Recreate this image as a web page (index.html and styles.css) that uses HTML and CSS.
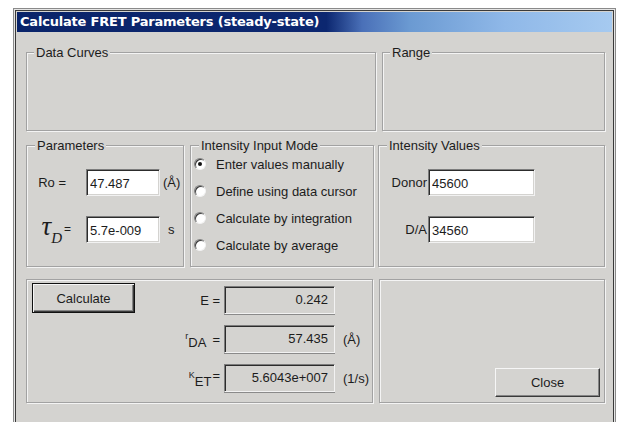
FILE: index.html
```html
<!DOCTYPE html>
<html lang="en">
<head>
<meta charset="utf-8">
<title>Calculate FRET Parameters</title>
<link rel="stylesheet" href="styles.css">
</head>
<body>
<div class="window">
  <div class="titlebar">Calculate FRET Parameters (steady-state)</div>
  <div class="client">
    <div class="row row-top">
      <fieldset class="group g-curves"><legend>Data Curves</legend></fieldset>
      <fieldset class="group g-range"><legend>Range</legend></fieldset>
    </div>

    <div class="row row-mid">
      <fieldset class="group g-params">
        <legend>Parameters</legend>
        <div class="field-row">
          <span class="flabel lbl-ro">Ro =</span>
          <input class="edit edit-param" type="text" value="47.487">
          <span class="unit">(Å)</span>
        </div>
        <div class="field-row">
          <span class="flabel lbl-tau"><span class="tau">τ</span><span class="tau-sub">D</span><span class="tau-eq">=</span></span>
          <input class="edit edit-param" type="text" value="5.7e-009">
          <span class="unit unit-s">s</span>
        </div>
      </fieldset>

      <fieldset class="group g-mode">
        <legend>Intensity Input Mode</legend>
        <div class="options">
          <label class="option"><span class="radio checked"></span>Enter values manually</label>
          <label class="option"><span class="radio"></span>Define using data cursor</label>
          <label class="option"><span class="radio"></span>Calculate by integration</label>
          <label class="option"><span class="radio"></span>Calculate by average</label>
        </div>
      </fieldset>

      <fieldset class="group g-values">
        <legend>Intensity Values</legend>
        <div class="field-row">
          <span class="vlabel">Donor</span>
          <input class="edit edit-value" type="text" value="45600">
        </div>
        <div class="field-row">
          <span class="vlabel">D/A</span>
          <input class="edit edit-value" type="text" value="34560">
        </div>
      </fieldset>
    </div>

    <div class="row row-bottom">
      <fieldset class="group g-calc">
        <div class="calc-grid">
          <button class="btn btn-default btn-calc" type="button">Calculate</button>

          <span class="rlabel r1">E =</span>
          <div class="out r1">0.242</div>

          <span class="rlabel r2"><span class="mini">r</span><span class="sub">DA</span><span class="eq">=</span></span>
          <div class="out r2">57.435</div>
          <span class="unit r2">(Å)</span>

          <span class="rlabel r3"><span class="mini">K</span><span class="sub">ET</span><span class="eq eq-tight">=</span></span>
          <div class="out r3">5.6043e+007</div>
          <span class="unit r3">(1/s)</span>
        </div>
      </fieldset>
      <fieldset class="group g-actions">
        <button class="btn btn-close" type="button">Close</button>
      </fieldset>
    </div>
  </div>
</div>
</body>
</html>
```

FILE: styles.css
```css
html, body {
  margin: 0;
  background: #ffffff;
  overflow: hidden;
}

body {
  padding: 8px 0 0 13px;
  font-family: "Liberation Sans", Arial, sans-serif;
  font-size: 13px;
  color: #1c1c1c;
}

/* dialog frame; its lower edge continues below the visible area */
.window {
  box-sizing: border-box;
  width: 603px;
  height: 414px;
  padding: 3px 3px 0;
  background: #d4d3d0;
  border: 1px solid #8a8a8a;
  border-bottom: 0;
  box-shadow:
    inset 1px 1px 0 #e6e6e6,
    inset -1px 0 0 #e6e6e6,
    inset 2px 2px 0 #3a3a3a,
    inset -2px 0 0 #3a3a3a;
}

.titlebar {
  height: 20px;
  line-height: 20px;
  padding-left: 3px;
  color: #ffffff;
  font-family: "DejaVu Sans", Verdana, sans-serif;
  font-weight: bold;
  font-size: 13px;
  letter-spacing: -0.2px;
  white-space: nowrap;
  background: linear-gradient(to right, #0a246a 0%, #0c2770 52%, #4a70b8 58%, #6b9ad2 66%, #8fb8e8 82%, #a6caf0 100%);
}

.client {
  padding: 13px 7px 0 9px;
}

.row {
  display: flex;
}

.row-top { height: 86px; }
.row-mid { height: 129px; margin-top: 7px; }
.row-bottom { height: 124px; margin-top: 12px; }

/* etched group boxes */
.group {
  box-sizing: border-box;
  margin: 0;
  padding: 0;
  min-width: 0;
  height: 100%;
  border: 1px solid #a2a2a2;
  box-shadow: inset 1px 1px 0 #f4f4f4, 1px 1px 0 #f4f4f4;
}

.group legend {
  margin-left: 7px;
  padding: 0 2px;
  line-height: 15px;
  background: #d4d3d0;
}

.g-curves { width: 350px; }
.g-range { flex: 1; margin-left: 6px; }
.g-range legend { margin-left: 7px; }

.g-params { width: 158px; padding-top: 16px; }
.g-params legend { margin-left: 8px; }
.g-mode { width: 184px; margin-left: 6px; padding-top: 3px; }
.g-mode legend { margin-left: 8px; }
.g-values { flex: 1; margin-left: 4px; padding-top: 16px; }
.g-values legend { margin-left: 8px; }

.g-calc { width: 347px; padding: 6px 0 0 5px; }
.g-actions {
  flex: 1;
  margin-left: 6px;
  display: flex;
  align-items: flex-end;
  justify-content: flex-end;
  padding: 0 4px 5px 0;
}

/* label + edit rows */
.field-row {
  display: flex;
  align-items: center;
  height: 27px;
  margin-bottom: 20px;
}

.flabel {
  box-sizing: border-box;
  width: 59px;
  text-align: right;
  white-space: nowrap;
}

.lbl-ro { padding-right: 20px; }
.lbl-tau { padding-right: 15px; }

.tau {
  font-family: "Liberation Serif", "Times New Roman", serif;
  font-style: italic;
  font-size: 27px;
  line-height: 1;
  position: relative;
  top: -3px;
}

.tau-sub {
  font-family: "Liberation Serif", "Times New Roman", serif;
  font-style: italic;
  font-size: 15px;
  position: relative;
  top: 5px;
}

.tau-eq {
  font-size: 12px;
  margin-left: 2px;
  position: relative;
  top: -5px;
}

.edit {
  box-sizing: border-box;
  height: 27px;
  margin: 0;
  padding: 2px 0 0 3px;
  font: inherit;
  color: #1c1c1c;
  background: #ffffff;
  border: 1px solid;
  border-color: #7c7c7c #f2f2f2 #f2f2f2 #7c7c7c;
  box-shadow: inset 1px 1px 0 #2c2c2c, inset -1px -1px 0 #d4d3d0;
  outline: none;
}

.edit-param { width: 74px; }
.edit-value { width: 107px; margin-left: 1px; }

.unit { margin-left: 3px; }
.unit-s { margin-left: 8px; }

.vlabel {
  width: 48px;
  text-align: right;
}

/* radio group */
.options {
  display: flex;
  flex-direction: column;
  gap: 11px;
}

.option {
  display: flex;
  align-items: center;
  height: 16px;
  padding-left: 3px;
  white-space: nowrap;
}

.radio {
  box-sizing: border-box;
  flex: none;
  width: 12px;
  height: 12px;
  margin-right: 10px;
  border-radius: 50%;
  background: #ffffff;
  border: 1px solid;
  border-color: #808080 #f2f2f2 #f2f2f2 #808080;
  box-shadow: inset 1px 1px 0 #3a3a3a;
  display: flex;
  align-items: center;
  justify-content: center;
}

.radio.checked::after {
  content: "";
  width: 4px;
  height: 4px;
  border-radius: 50%;
  background: #111111;
}

/* results */
.calc-grid {
  display: grid;
  grid-template-columns: 103px 89px 119px 1fr;
  grid-auto-rows: 28px;
  row-gap: 11px;
  align-items: center;
}

.btn {
  box-sizing: border-box;
  margin: 0;
  padding: 0;
  font: inherit;
  color: #1c1c1c;
  background: #d4d3d0;
  border: 1px solid;
  border-color: #f6f6f6 #3a3a3a #3a3a3a #f6f6f6;
  box-shadow: inset -1px -1px 0 #858585;
}

.btn-default {
  border: 1px solid #111111;
  box-shadow: inset 1px 1px 0 #f6f6f6, inset -1px -1px 0 #3a3a3a, inset -2px -2px 0 #858585;
}

.btn-calc {
  grid-column: 1;
  grid-row: 1;
  width: 103px;
  height: 30px;
  align-self: start;
  margin-top: -3px;
}

.btn-close {
  width: 105px;
  height: 29px;
}

.rlabel {
  grid-column: 2;
  justify-self: end;
  padding-right: 4px;
  white-space: nowrap;
}

.out {
  grid-column: 3;
  box-sizing: border-box;
  width: 111px;
  height: 28px;
  line-height: 25px;
  padding-right: 6px;
  text-align: right;
  border: 1px solid;
  border-color: #7c7c7c #f2f2f2 #f2f2f2 #7c7c7c;
  box-shadow: inset 1px 1px 0 #2c2c2c, 0 1px 0 #8a8a8a;
}

.calc-grid .unit {
  grid-column: 4;
  margin-left: 0;
}

.r1 { grid-row: 1; }
.r2 { grid-row: 2; }
.r3 { grid-row: 3; }

.mini {
  font-size: 9px;
  position: relative;
  top: -5px;
}

.sub {
  position: relative;
  top: 3px;
}

.eq { margin-left: 6px; }
.eq-tight {
  margin-left: 1px;
  position: relative;
  top: -3px;
}
```
